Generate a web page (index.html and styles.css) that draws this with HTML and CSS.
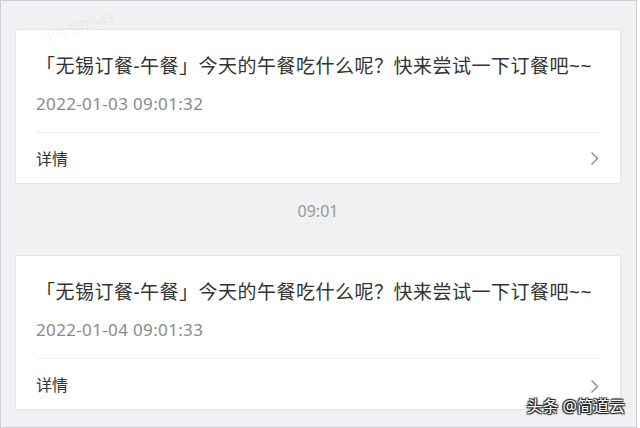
FILE: index.html
```html
<!DOCTYPE html>
<html lang="zh-CN">
<head>
    <meta charset="UTF-8">
    <meta name="viewport" content="width=device-width, initial-scale=1.0">
    <title>订餐提醒</title>
    <link rel="stylesheet" href="styles.css">
</head>
<body>
    <div class="frame">
        <div class="watermark">小牛玥7543</div>

        <div class="card">
            <div class="msg-title">「无锡订餐-午餐」今天的午餐吃什么呢？快来尝试一下订餐吧~~</div>
            <div class="msg-date">2022-01-03 09:01:32</div>
            <div class="msg-footer">
                <span>详情</span>
                <svg class="chevron" width="9" height="15" viewBox="0 0 9 15">
                    <path d="M1.5 1.5 L7.5 7.5 L1.5 13.5" fill="none" stroke="#8c8c8c" stroke-width="1.4"/>
                </svg>
            </div>
        </div>

        <div class="time-row">09:01</div>

        <div class="card">
            <div class="msg-title">「无锡订餐-午餐」今天的午餐吃什么呢？快来尝试一下订餐吧~~</div>
            <div class="msg-date">2022-01-04 09:01:33</div>
            <div class="msg-footer">
                <span>详情</span>
                <svg class="chevron low" width="9" height="15" viewBox="0 0 9 15">
                    <path d="M1.5 1.5 L7.5 7.5 L1.5 13.5" fill="none" stroke="#8c8c8c" stroke-width="1.4"/>
                </svg>
            </div>
        </div>

        <div class="credit">头条 @简道云</div>
    </div>
</body>
</html>
```

FILE: styles.css
```css
:root {
    --bg: #f0f1f3;
    --line: #e4e5e7;
    --text: #333;
    --muted: #8a8a8a;
}

* {
    box-sizing: border-box;
}

body {
    margin: 0;
    font-family: "Noto Sans", "Noto Sans CJK SC", sans-serif;
    background: #fff;
}

.frame {
    position: relative;
    width: 637px;
    height: 428px;
    overflow: hidden;
    background: var(--bg);
    border: 1px solid #cdd0d3;
    padding: 28px 0 0 14px;
}

.card {
    width: 606px;
    background: #fff;
    border: 1px solid var(--line);
    border-radius: 2px;
    padding: 0 20px;
}

.msg-title {
    padding-top: 23px;
    font-size: 19px;
    line-height: 26px;
    color: var(--text);
    white-space: nowrap;
    letter-spacing: 0.5px;
}

.msg-date {
    margin-top: 13px;
    font-size: 17px;
    line-height: 24px;
    color: var(--muted);
    letter-spacing: 0.35px;
}

.msg-footer {
    margin-top: 16px;
    border-top: 1px solid #eeeff1;
    height: 51px;
    display: flex;
    align-items: center;
    justify-content: space-between;
    font-size: 16px;
    color: var(--text);
}

.chevron {
    margin-right: 1px;
    margin-top: 1px;
}

.chevron.low {
    margin-top: 5px;
}

.time-row {
    width: 606px;
    padding: 16px 0 33px;
    text-align: center;
    font-size: 16px;
    line-height: 22px;
    color: #999;
}

.credit {
    position: absolute;
    right: 11px;
    bottom: 10px;
    font-size: 16px;
    color: #fff;
    text-shadow: 0 0 1px #222, 1px 1px 1px #222, -1px -1px 1px #222, 1px -1px 1px #222, -1px 1px 1px #222;
}

.watermark {
    position: absolute;
    left: 40px;
    top: 16px;
    font-size: 14px;
    color: rgba(0, 0, 0, 0.06);
    transform: rotate(-18deg);
    white-space: nowrap;
}
```
